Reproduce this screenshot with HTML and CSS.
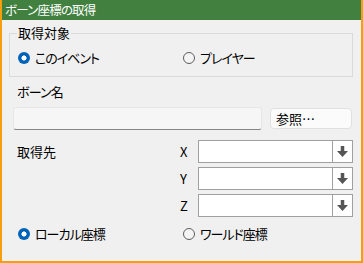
FILE: index.html
```html
<!DOCTYPE html>
<html>
<head>
    <meta charset="UTF-8">
    <title>ボーン座標の取得</title>
    <link rel="stylesheet" href="styles.css">
</head>
<body>
    <div class="window">
        <div class="titlebar">ボーン座標の取得</div>
        <div class="content">
            <fieldset class="group">
                <legend>取得対象</legend>
                <div class="radio-row">
                    <label class="radio checked"><span class="dot"></span>このイベント</label>
                    <label class="radio"><span class="dot"></span>プレイヤー</label>
                </div>
            </fieldset>

            <div class="field-label">ボーン名</div>
            <div class="bone-row">
                <div class="textbox"></div>
                <button class="browse">参照…</button>
            </div>

            <div class="target">
                <div class="target-label">取得先</div>
                <div class="coords">
                    <div class="coord">
                        <span class="axis">X</span>
                        <div class="combo">
                            <div class="combo-text"></div>
                            <div class="combo-btn"><svg width="11" height="11" viewBox="0 0 10 10"><path d="M3.4 0h3.2v4.6h3.4L5 10 0 4.6h3.4z"/></svg></div>
                        </div>
                    </div>
                    <div class="coord">
                        <span class="axis">Y</span>
                        <div class="combo">
                            <div class="combo-text"></div>
                            <div class="combo-btn"><svg width="11" height="11" viewBox="0 0 10 10"><path d="M3.4 0h3.2v4.6h3.4L5 10 0 4.6h3.4z"/></svg></div>
                        </div>
                    </div>
                    <div class="coord">
                        <span class="axis">Z</span>
                        <div class="combo">
                            <div class="combo-text"></div>
                            <div class="combo-btn"><svg width="11" height="11" viewBox="0 0 10 10"><path d="M3.4 0h3.2v4.6h3.4L5 10 0 4.6h3.4z"/></svg></div>
                        </div>
                    </div>
                </div>
            </div>

            <div class="radio-row bottom">
                <label class="radio checked"><span class="dot"></span>ローカル座標</label>
                <label class="radio"><span class="dot"></span>ワールド座標</label>
            </div>
        </div>
    </div>
</body>
</html>
```

FILE: styles.css
```css
body {
    margin: 0;
    font-family: "Noto Sans CJK JP", "Noto Sans", sans-serif;
    font-size: 13px;
    font-feature-settings: "palt";
    color: #000000;
    background: #f0f0f0;
}

.window {
    width: 363px;
    height: 263px;
    box-sizing: border-box;
    border: 2px solid #f59f0f;
    border-top: none;
    background: #f0f0f0;
    overflow: hidden;
}

.titlebar {
    height: 20px;
    line-height: 20px;
    padding-left: 3px;
    background: #41803f;
    color: #ffffff;
    font-size: 12.5px;
    letter-spacing: -0.8px;
}

.content {
    padding: 0 8px 0 7px;
}

/* group box */
.group {
    margin: 5px 0 0 0;
    padding: 0 0 10px 8px;
    border: 1px solid #dadada;
}

.group legend {
    padding: 0 1px;
    margin-left: -1px;
    line-height: 16px;
}

.radio-row {
    display: flex;
    height: 16px;
    margin-top: 9px;
}

.radio {
    display: inline-flex;
    align-items: center;
    gap: 5px;
    width: 165px;
    line-height: 16px;
    letter-spacing: -1px;
}

.radio .dot {
    flex: none;
    width: 12px;
    height: 12px;
    box-sizing: border-box;
    border-radius: 50%;
    border: 1px solid #5c5c5c;
    background: #f4f4f4;
}

.radio.checked .dot {
    border: none;
    background: radial-gradient(circle, #ffffff 0 2.3px, #0063b8 2.8px);
}

/* bone name */
.field-label {
    margin: 7px 0 0 8px;
    line-height: 16px;
    letter-spacing: -0.8px;
}

.bone-row {
    display: flex;
    margin-top: 7px;
}

.textbox {
    width: 249px;
    height: 23px;
    box-sizing: border-box;
    margin-left: 4px;
    background: #f6f6f6;
    border: 1px solid #e6e6e6;
    border-bottom-color: #868686;
    border-radius: 3px;
}

.browse {
    width: 82px;
    height: 21px;
    margin: 1px 0 0 8px;
    padding: 0 0 0 5px;
    text-align: left;
    font: inherit;
    line-height: 19px;
    color: #000000;
    background: #fbfbfb;
    border: 1px solid #e0e0e0;
    border-radius: 4px;
}

/* target coords */
.target {
    display: flex;
    margin-top: 10px;
}

.target-label {
    width: 163px;
    margin-left: 8px;
    line-height: 23px;
}

.coords {
    display: flex;
    flex-direction: column;
    gap: 4px;
}

.coord {
    display: flex;
    align-items: center;
}

.axis {
    width: 18px;
}

.combo {
    display: flex;
    width: 155px;
    height: 23px;
    box-sizing: border-box;
    border: 1px solid #a0a0a0;
    background: #ffffff;
}

.combo-text {
    flex: 1;
}

.combo-btn {
    width: 19px;
    display: flex;
    align-items: center;
    justify-content: center;
    border-left: 1px solid #a0a0a0;
}

.combo-btn svg {
    fill: #555555;
}

.radio-row.bottom {
    margin: 9px 0 0 9px;
}
```
